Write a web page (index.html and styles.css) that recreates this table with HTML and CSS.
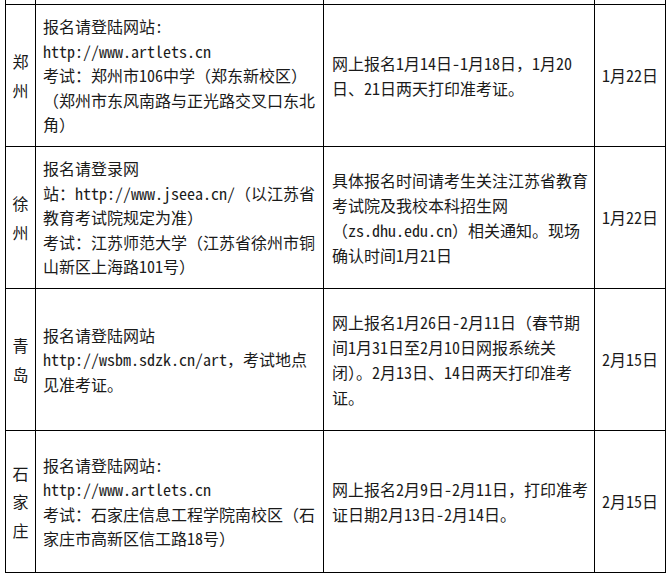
FILE: index.html
```html
<!DOCTYPE html>
<html lang="zh-CN">
<head>
<meta charset="utf-8">
<title>报名信息</title>
<link rel="stylesheet" href="styles.css">
</head>
<body>
<div class="sheet">
<table class="info">
<colgroup>
<col class="c-city">
<col class="c-site">
<col class="c-date">
<col class="c-exam">
</colgroup>
<tbody>
<tr class="cut"><td></td><td></td><td></td><td></td></tr>
<tr class="row">
<td class="city">郑<br>州</td>
<td class="site">报名请登陆网站:<br>http://www.artlets.cn<br>考试：郑州市106中学（郑东新校区）<br>（郑州市东风南路与正光路交叉口东北<br>角）</td>
<td class="reg">网上报名1月14日-1月18日，1月20<br>日、21日两天打印准考证。</td>
<td class="day">1月22日</td>
</tr>
<tr class="row">
<td class="city">徐<br>州</td>
<td class="site">报名请登录网<br>站：http://www.jseea.cn/（以江苏省<br>教育考试院规定为准）<br>考试：江苏师范大学（江苏省徐州市铜<br>山新区上海路101号）</td>
<td class="reg">具体报名时间请考生关注江苏省教育<br>考试院及我校本科招生网<br>（zs.dhu.edu.cn）相关通知。现场<br>确认时间1月21日</td>
<td class="day">1月22日</td>
</tr>
<tr class="row">
<td class="city">青<br>岛</td>
<td class="site">报名请登陆网站<br>http://wsbm.sdzk.cn/art，考试地点<br>见准考证。</td>
<td class="reg">网上报名1月26日-2月11日（春节期<br>间1月31日至2月10日网报系统关<br>闭）。2月13日、14日两天打印准考<br>证。</td>
<td class="day">2月15日</td>
</tr>
<tr class="row">
<td class="city">石<br>家<br>庄</td>
<td class="site">报名请登陆网站:<br>http://www.artlets.cn<br>考试：石家庄信息工程学院南校区（石<br>家庄市高新区信工路18号）</td>
<td class="reg">网上报名2月9日-2月11日，打印准考<br>证日期2月13日-2月14日。</td>
<td class="day">2月15日</td>
</tr>
</tbody>
</table>
</div>
</body>
</html>
```
FILE: styles.css
```css
html, body {
  margin: 0;
  padding: 0;
  background: #fff;
}

body {
  font-family: "Noto Sans Mono CJK SC", "Noto Sans CJK SC", sans-serif;
  font-size: 16px;
  color: #1a1a1a;
}

.sheet {
  padding-left: 5px;
}

.info {
  border-collapse: collapse;
  table-layout: fixed;
  width: 660px;
}

.c-city { width: 30px; }
.c-site { width: 288px; }
.c-date { width: 271px; }
.c-exam { width: 71px; }

.info td {
  border: 1px solid #000;
  padding: 0;
  vertical-align: middle;
  white-space: nowrap;
}

.info .cut td {
  border-top: none;
  height: 4px;
}

.row {
  height: 142px;
}

.info .city {
  text-align: center;
  line-height: 28.5px;
}

.info .site {
  padding: 0 2px 0 7px;
  line-height: 24.5px;
}

.info .reg {
  padding: 0 2px 0 8px;
  line-height: 25px;
}

.info .day {
  text-align: center;
  line-height: 25px;
}
```
